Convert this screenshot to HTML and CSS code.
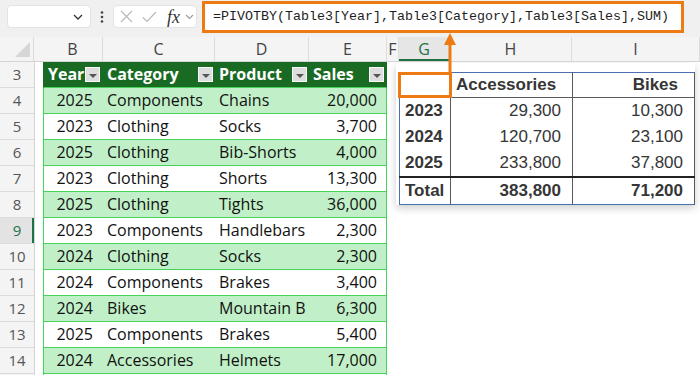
FILE: index.html
```html
<!DOCTYPE html>
<html lang="en">
<head>
    <meta charset="UTF-8">
    <title>PIVOTBY</title>
    <link rel="stylesheet" href="styles.css">
</head>
<body>
    <!-- Formula bar -->
    <div class="toolbar">
        <div class="namebox">
            <svg width="10" height="6" viewBox="0 0 10 6"><path d="M1 1L5 5L9 1" fill="none" stroke="#333" stroke-width="1.3"/></svg>
        </div>
        <div class="dots">
            <svg width="4" height="12" viewBox="0 0 4 12"><circle cx="2" cy="1.5" r="1.3" fill="#444"/><circle cx="2" cy="6" r="1.3" fill="#444"/><circle cx="2" cy="10.5" r="1.3" fill="#444"/></svg>
        </div>
        <div class="fxbox">
            <svg class="ico-x" width="13" height="13" viewBox="0 0 13 13"><path d="M1 1L12 12M12 1L1 12" stroke="#b9b9b9" stroke-width="1.2"/></svg>
            <svg class="ico-ok" width="15" height="12" viewBox="0 0 15 12"><path d="M1 6.5L5 10.5L14 1" fill="none" stroke="#b9b9b9" stroke-width="1.2"/></svg>
            <span class="fx">fx</span>
            <svg class="ico-dd" width="9" height="6" viewBox="0 0 9 6"><path d="M1 1L4.5 4.5L8 1" fill="none" stroke="#999" stroke-width="1.1"/></svg>
        </div>
        <div class="formula">=PIVOTBY(Table3[Year],Table3[Category],Table3[Sales],SUM)</div>
    </div>

    <!-- Column letters -->
    <div class="colbar">
        <div class="corner"><span class="tri"></span></div>
        <div class="col-a"></div>
        <div>B</div>
        <div>C</div>
        <div>D</div>
        <div>E</div>
        <div>F</div>
        <div class="sel">G</div>
        <div>H</div>
        <div>I</div>
    </div>

    <div class="sheet">
        <div class="rowheads">
            <div class="rh">3</div>
            <div class="rh">4</div>
            <div class="rh">5</div>
            <div class="rh">6</div>
            <div class="rh">7</div>
            <div class="rh">8</div>
            <div class="rh sel">9</div>
            <div class="rh">10</div>
            <div class="rh">11</div>
            <div class="rh">12</div>
            <div class="rh">13</div>
            <div class="rh">14</div>
            <div class="rh"></div>
        </div>
        <div class="gap-a"></div>

        <!-- Table3 -->
        <div class="tbl">
            <div class="tr head">
                <div class="hc">Year<span class="filter"></span></div>
                <div class="hc">Category<span class="filter"></span></div>
                <div class="hc">Product<span class="filter"></span></div>
                <div class="hc">Sales<span class="filter"></span></div>
            </div>
            <div class="tr band"><div class="c num">2025</div><div class="c">Components</div><div class="c">Chains</div><div class="c num">20,000</div></div>
            <div class="tr"><div class="c num">2023</div><div class="c">Clothing</div><div class="c">Socks</div><div class="c num">3,700</div></div>
            <div class="tr band"><div class="c num">2025</div><div class="c">Clothing</div><div class="c">Bib-Shorts</div><div class="c num">4,000</div></div>
            <div class="tr"><div class="c num">2023</div><div class="c">Clothing</div><div class="c">Shorts</div><div class="c num">13,300</div></div>
            <div class="tr band"><div class="c num">2025</div><div class="c">Clothing</div><div class="c">Tights</div><div class="c num">36,000</div></div>
            <div class="tr"><div class="c num">2023</div><div class="c">Components</div><div class="c">Handlebars</div><div class="c num">2,300</div></div>
            <div class="tr band"><div class="c num">2024</div><div class="c">Clothing</div><div class="c">Socks</div><div class="c num">2,300</div></div>
            <div class="tr"><div class="c num">2024</div><div class="c">Components</div><div class="c">Brakes</div><div class="c num">3,400</div></div>
            <div class="tr band"><div class="c num">2024</div><div class="c">Bikes</div><div class="c">Mountain B</div><div class="c num">6,300</div></div>
            <div class="tr"><div class="c num">2025</div><div class="c">Components</div><div class="c">Brakes</div><div class="c num">5,400</div></div>
            <div class="tr band"><div class="c num">2024</div><div class="c">Accessories</div><div class="c">Helmets</div><div class="c num">17,000</div></div>
            <div class="tr"><div class="c num"></div><div class="c"></div><div class="c"></div><div class="c num"></div></div>
        </div>

        <!-- PIVOTBY result, pasted picture -->
        <div class="right">
            <div class="shot">
                <table class="pv">
                    <colgroup><col class="w1"><col class="w2"><col class="w2"></colgroup>
                    <tr class="pv-head">
                        <th class="lab"></th>
                        <th class="left">Accessories</th>
                        <th class="num bikes">Bikes</th>
                    </tr>
                    <tr><th class="lab">2023</th><td class="num">29,300</td><td class="num">10,300</td></tr>
                    <tr><th class="lab">2024</th><td class="num">120,700</td><td class="num">23,100</td></tr>
                    <tr><th class="lab">2025</th><td class="num">233,800</td><td class="num">37,800</td></tr>
                    <tr class="pv-total"><th class="lab">Total</th><th class="num">383,800</th><th class="num">71,200</th></tr>
                </table>
            </div>
        </div>
    </div>

    <!-- annotation -->
    <div class="mark-box"></div>
    <svg class="mark-arrow" width="16" height="40" viewBox="0 0 16 40">
        <path d="M2 12L8 0L14 12Z" fill="#ee7a14"/>
        <rect x="6.5" y="10" width="3" height="30" fill="#ee7a14"/>
    </svg>
</body>
</html>
```

FILE: styles.css
```css
body {
    margin: 0;
    width: 700px;
    height: 375px;
    overflow: hidden;
    position: relative;
    background: #fff;
    font-family: "Open Sans", sans-serif;
}

/* formula bar */
.toolbar {
    display: flex;
    align-items: flex-start;
    height: 37px;
    background: #f0f0f0;
}

.namebox,
.fxbox {
    margin-top: 5px;
    width: 84px;
    height: 23px;
    box-sizing: border-box;
    background: #fff;
    border: 1px solid #e3e3e3;
    border-radius: 4px;
    display: flex;
    align-items: center;
}

.namebox {
    margin-left: 7px;
    justify-content: flex-end;
    padding-right: 7px;
}

.dots {
    width: 22px;
    height: 34px;
    display: flex;
    align-items: center;
    justify-content: center;
}

.fxbox {
    padding-left: 6px;
}

.ico-ok {
    margin-left: 9px;
}

.fx {
    margin-left: 10px;
    font-family: "Liberation Serif", serif;
    font-style: italic;
    font-size: 18px;
    color: #333;
    line-height: 20px;
}

.ico-dd {
    margin-left: 5px;
}

.formula {
    margin: 1px 0 0 5px;
    width: 482px;
    height: 32px;
    box-sizing: border-box;
    border: 3px solid #ee7a14;
    background: #fff;
    padding-left: 8px;
    font-family: "Liberation Mono", monospace;
    font-size: 13.33px;
    line-height: 26px;
    color: #1e1e1e;
    white-space: nowrap;
}

/* column letters */
.colbar {
    display: grid;
    grid-template-columns: 34px 9px 60px 112px 94px 78px 12px 51px 122px 1fr;
    height: 25px;
    box-sizing: border-box;
    background: #f4f4f4;
    border-bottom: 1px solid #d4d4d4;
    font-size: 16px;
    color: #444;
}

.colbar div {
    border-right: 1px solid #dcdcdc;
    text-align: center;
    line-height: 24px;
}

.colbar .col-a {
    border-right: none;
}

.colbar .sel {
    background: #e6e6e6;
    color: #1e7145;
    box-shadow: inset 0 -2px #1e7145;
}

.corner {
    position: relative;
}

.tri {
    position: absolute;
    right: 3px;
    bottom: 4px;
    width: 0;
    height: 0;
    border-left: 15px solid transparent;
    border-bottom: 15px solid #d6d6d6;
}

/* sheet */
.sheet {
    display: flex;
    height: 313px;
    overflow: hidden;
}

.rowheads {
    width: 35px;
    box-sizing: border-box;
    background: #f4f4f4;
    border-right: 1px solid #d4d4d4;
}

.rh {
    height: 26px;
    box-sizing: border-box;
    border-bottom: 1px solid #dcdcdc;
    text-align: center;
    line-height: 25px;
    font-size: 15px;
    color: #555;
}

.rh.sel {
    background: #e3e3e3;
    color: #1e7145;
    box-shadow: inset -2px 0 #1e7145;
}

.gap-a {
    width: 8px;
}

.tbl {
    width: 344px;
    font-size: 16px;
    color: #111;
}

.tr {
    display: grid;
    grid-template-columns: 59px 112px 94px 77px;
    height: 26px;
    box-sizing: border-box;
    border: solid #47d359;
    border-width: 0 1px 1px 1px;
}

.tr.band {
    background: #c1f0c8;
}

.tr.head {
    background: #196b24;
    border-left-color: #196b24;
    border-right-color: #196b24;
    color: #fff;
    font-weight: bold;
}

.c {
    padding: 0 4px;
    line-height: 25px;
    white-space: nowrap;
    overflow: hidden;
}

.c.num {
    text-align: right;
    padding-right: 9px;
}

.tr .c.num:first-child {
    padding-right: 10px;
}

.hc {
    display: flex;
    justify-content: space-between;
    align-items: center;
    padding: 0 2px 0 4px;
    line-height: 25px;
}

.tr .hc:first-child {
    padding-right: 3px;
}

.filter {
    width: 15px;
    height: 15px;
    box-sizing: border-box;
    background: #dedede;
    border: 1px solid #f8f8f8;
    display: flex;
    align-items: center;
    justify-content: center;
    padding-top: 2px;
}

.filter::after {
    content: "";
    border-left: 4px solid transparent;
    border-right: 4px solid transparent;
    border-top: 4px solid #555;
}

/* pasted picture of the result */
.right {
    flex: 1;
}

.shot {
    margin: 1px 0 0 9px;
    width: 299px;
    height: 142px;
    box-sizing: border-box;
    padding: 9px 0 0 3px;
    background: #fff;
    box-shadow: 0 3px 8px rgba(0, 0, 0, 0.2);
}

.pv {
    border-collapse: collapse;
    table-layout: fixed;
    width: 295px;
    border: 1px solid #4a70b0;
    font-family: "Liberation Sans", Arial, sans-serif;
    font-size: 17px;
    color: #363636;
}

.pv .w1 { width: 51px; }
.pv .w2 { width: 122px; }

.pv th,
.pv td {
    height: 26px;
    padding: 0;
    white-space: nowrap;
    border-right: 1px solid #5a5a5a;
}

.pv th {
    font-weight: bold;
}

.pv td {
    font-weight: normal;
}

.pv .lab {
    text-align: left;
    padding-left: 5px;
}

.pv .num {
    text-align: right;
    padding-right: 11px;
}

.pv .left {
    text-align: left;
    padding-left: 5px;
}

.pv .bikes {
    padding-right: 16px;
}

.pv-head th {
    height: 24px;
    border-bottom: 1px solid #5a5a5a;
}

.pv-total th {
    border-top: 2px solid #222;
}

/* orange callout */
.mark-box {
    position: absolute;
    left: 398px;
    top: 72px;
    width: 54px;
    height: 26px;
    box-sizing: border-box;
    border: 3px solid #ee7a14;
}

.mark-arrow {
    position: absolute;
    left: 442px;
    top: 33px;
}
```
